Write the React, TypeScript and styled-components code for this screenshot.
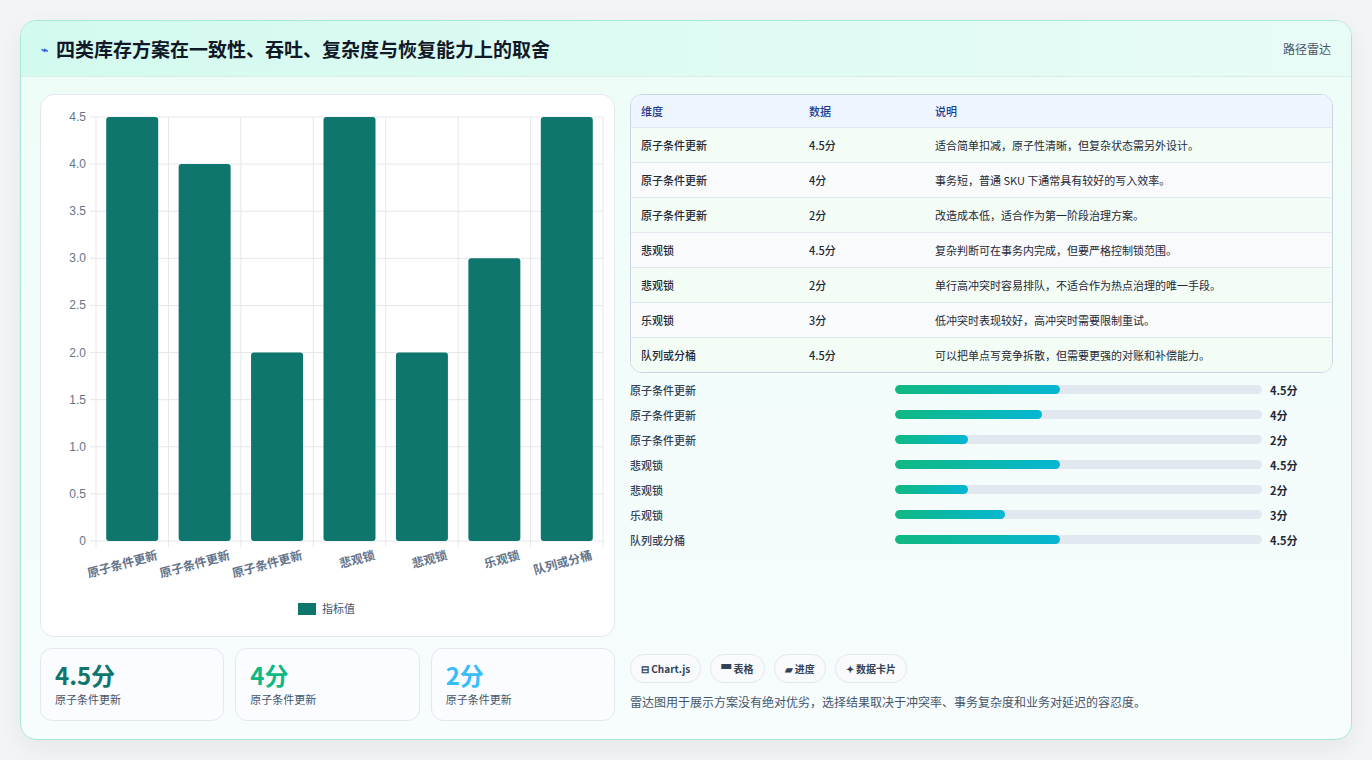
import React from "react";
import styled, { createGlobalStyle } from "styled-components";

const G = createGlobalStyle`
  html,body{margin:0;padding:0;background:#f3f4f6;}
  body{font-family:"Noto Sans CJK SC","Noto Sans",sans-serif;color:#1f2937;}
`;
const Page = styled.div`width:1372px;height:760px;padding:20px;box-sizing:border-box;`;
const Card = styled.div`width:1332px;height:720px;box-sizing:border-box;border:1px solid #a7e8dc;border-radius:16px;background:linear-gradient(180deg,#eefdf8,#f7fcfd);overflow:hidden;box-shadow:0 8px 24px rgba(0,0,0,.06);display:flex;flex-direction:column;`;
const Header = styled.div`height:55px;flex:none;display:flex;align-items:center;justify-content:space-between;padding:0 20px;background:linear-gradient(90deg,#d3faef,#e9fbf7);border-bottom:1px solid #d6efe9;`;
const Title = styled.h1`margin:0;font-size:19px;font-weight:700;color:#111827;display:flex;align-items:center;gap:8px;`;
const Tag = styled.span`font-size:12px;color:#475569;`;
const Body = styled.div`flex:1;display:grid;grid-template-columns:575px 703px;gap:15px;padding:17px 19px 18px 19px;`;
const Col = styled.div`display:flex;flex-direction:column;gap:11px;`;
const ChartBox = styled.div`height:543px;background:#fff;border:1px solid #e2e8f0;border-radius:14px;box-sizing:border-box;`;
const Stats = styled.div`display:grid;grid-template-columns:repeat(3,1fr);gap:11px;`;
const Stat = styled.div`height:73px;box-sizing:border-box;background:#fafcff;border:1px solid #e2e8f0;border-radius:12px;padding:10px 14px;`;
const Big = styled.div<{c:string}>`font-size:24px;font-weight:700;color:${p=>p.c};line-height:32px;`;
const Small = styled.div`font-size:11px;color:#475569;`;
const Table = styled.div`border:1px solid #cbd5e1;border-radius:12px;overflow:hidden;background:#fff;`;
const Row = styled.div<{h?:boolean;alt?:boolean}>`display:grid;grid-template-columns:168px 126px 1fr;padding-left:10px;height:${p=>p.h?32:35}px;align-items:center;font-size:11px;
  background:${p=>p.h?"#eef5ff":p.alt?"#f8fafc":"#f3fdf6"};color:${p=>p.h?"#1e3a8a":"#1f2937"};border-top:${p=>p.h?"none":"1px solid #e2e8f0"};box-sizing:border-box;font-weight:${p=>p.h?500:400};`;
const Bars = styled.div`display:flex;flex-direction:column;gap:8px;margin-top:8px;`;
const BRow = styled.div`display:grid;grid-template-columns:265px 367px 1fr;gap:0;align-items:center;height:17px;font-size:11px;font-weight:500;color:#334155;`;
const Track = styled.div`height:9px;border-radius:5px;background:#e2e8f0;overflow:hidden;`;
const Fill = styled.div`height:100%;border-radius:5px;background:linear-gradient(90deg,#10b981,#06b6d4);`;
const Val = styled.span`padding-left:8px;font-weight:700;color:#1f2937;`;
const Spacer = styled.div`flex:1;`;
const Chips = styled.div`display:flex;gap:9px;`;
const Chip = styled.span`height:27px;padding:0 10px;display:flex;align-items:center;border:1px solid #e2e8f0;border-radius:14px;background:#f8fafc;font-size:10px;font-weight:700;color:#334155;`;
const Note = styled.p`margin:10px 0 11px 0;font-size:12px;color:#475569;`;

const data=[["原子条件更新",4.5,"适合简单扣减，原子性清晰，但复杂状态需另外设计。"],["原子条件更新",4,"事务短，普通 SKU 下通常具有较好的写入效率。"],["原子条件更新",2,"改造成本低，适合作为第一阶段治理方案。"],["悲观锁",4.5,"复杂判断可在事务内完成，但要严格控制锁范围。"],["悲观锁",2,"单行高冲突时容易排队，不适合作为热点治理的唯一手段。"],["乐观锁",3,"低冲突时表现较好，高冲突时需要限制重试。"],["队列或分桶",4.5,"可以把单点写竞争拆散，但需要更强的对账和补偿能力。"]] as [string,number,string][];

function Chart(){
  const x0=55,x1=562,yt=22,yb=446;const w=(x1-x0)/7;
  const ys=[0,.5,1,1.5,2,2.5,3,3.5,4,4.5];
  return <svg width="573" height="541" style={{display:"block"}} fontFamily="Liberation Sans,Arial,sans-serif">
    {ys.map(v=>{const y=yb-(v/4.5)*(yb-yt);return <g key={v}><line x1={x0-6} x2={x1} y1={y} y2={y} stroke="#e5e7eb"/><text x={x0-10} y={y+4} fontSize="12" fill="#64748b" textAnchor="end">{v===0?"0":v.toFixed(1)}</text></g>})}
    {Array.from({length:8}).map((_,i)=><line key={i} x1={x0+i*w} x2={x0+i*w} y1={yt} y2={yb+6} stroke="#e5e7eb"/>)}
    {data.map((d,i)=>{const h=(d[1]/4.5)*(yb-yt);const cx=x0+i*w+w/2;return <g key={i}>
      <rect x={cx-26} y={yb-h} width="52" height={h} rx="3" fill="#0f766e"/>
      <text transform={`translate(${cx+26},${yb+18}) rotate(-15)`} fontSize="12" fontWeight="700" fill="#64748b" textAnchor="end" fontFamily="Noto Sans CJK SC,sans-serif">{d[0]}</text></g>})}
    <rect x="257" y="508" width="18" height="12" fill="#0f766e"/>
    <text x="281" y="518" fontSize="11" fill="#475569" fontFamily="Noto Sans CJK SC,sans-serif">指标值</text>
  </svg>;
}

export default function App(){
  return <Page><G/><Card>
    <Header><Title><span style={{color:"#2563eb",fontSize:12}}>⌁</span>四类库存方案在一致性、吞吐、复杂度与恢复能力上的取舍</Title><Tag>路径雷达</Tag></Header>
    <Body>
      <Col>
        <ChartBox><Chart/></ChartBox>
        <Stats>
          <Stat><Big c="#0f766e">4.5分</Big><Small>原子条件更新</Small></Stat>
          <Stat><Big c="#10b981">4分</Big><Small>原子条件更新</Small></Stat>
          <Stat><Big c="#38bdf8">2分</Big><Small>原子条件更新</Small></Stat>
        </Stats>
      </Col>
      <Col style={{gap:0}}>
        <Table>
          <Row h><span>维度</span><span>数据</span><span>说明</span></Row>
          {data.map((d,i)=><Row key={i} alt={i%2===1}><span style={{fontWeight:500}}>{d[0]}</span><span style={{fontWeight:500}}>{d[1]}分</span><span>{d[2]}</span></Row>)}
        </Table>
        <Bars>
          {data.map((d,i)=><BRow key={i}><span>{d[0]}</span><Track><Fill style={{width:`${d[1]*10}%`}}/></Track><Val>{d[1]}分</Val></BRow>)}
        </Bars>
        <Spacer/>
        <Chips><Chip>⊟ Chart.js</Chip><Chip>▀ 表格</Chip><Chip>▰ 进度</Chip><Chip>✦ 数据卡片</Chip></Chips>
        <Note>雷达图用于展示方案没有绝对优劣，选择结果取决于冲突率、事务复杂度和业务对延迟的容忍度。</Note>
      </Col>
    </Body>
  </Card></Page>;
}
